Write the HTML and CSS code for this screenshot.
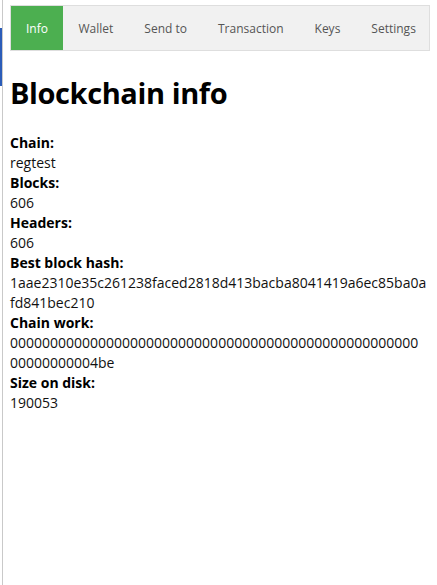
FILE: index.html
```html
<!DOCTYPE html>
<html lang="en">
<head>
<meta charset="utf-8">
<title>Blockchain info</title>
<link rel="stylesheet" href="styles.css">
</head>
<body>
<div class="window">
  <nav class="tabs">
    <a class="tab active" href="#">Info</a>
    <a class="tab" href="#">Wallet</a>
    <a class="tab" href="#">Send to</a>
    <a class="tab" href="#">Transaction</a>
    <a class="tab" href="#">Keys</a>
    <a class="tab" href="#">Settings</a>
  </nav>
  <main class="content">
    <h1 class="title">Blockchain info</h1>
    <dl class="info">
      <dt>Chain:</dt>
      <dd>regtest</dd>
      <dt>Blocks:</dt>
      <dd>606</dd>
      <dt>Headers:</dt>
      <dd>606</dd>
      <dt>Best block hash:</dt>
      <dd>1aae2310e35c261238faced2818d413bacba8041419a6ec85ba0a<wbr>fd841bec210</dd>
      <dt>Chain work:</dt>
      <dd>000000000000000000000000000000000000000000000000000<wbr>00000000004be</dd>
      <dt>Size on disk:</dt>
      <dd>190053</dd>
    </dl>
  </main>
</div>
</body>
</html>
```
FILE: styles.css
```css
html {
  margin: 0;
  background:
    linear-gradient(#2b5cb8, #2b5cb8) 0 28px / 2px 58px no-repeat,
    #ffffff;
}
body {
  margin: 0;
  font-family: "Open Sans", "Noto Sans", sans-serif;
  color: #111;
}
.window {
  margin-left: 2px;
  border-left: 1px solid #c9c9c9;
  min-height: 585px;
  padding: 5px 7px 0 7px;
  box-sizing: border-box;
  background: #fff;
}
.tabs {
  display: flex;
  background: #f1f1f1;
  border: 1px solid #dedede;
  height: 44px;
}
.tab {
  display: flex;
  align-items: center;
  padding: 0 15.5px;
  font-size: 12px;
  color: #555;
  text-decoration: none;
  white-space: nowrap;
}
.tab.active {
  background: #4caf50;
  color: #fff;
  width: 52px;
  box-sizing: border-box;
  justify-content: center;
}
.title {
  margin: 22px 0 20px;
  font-size: 29px;
  letter-spacing: -0.4px;
  font-weight: 700;
  line-height: 40px;
  color: #000;
}
.info {
  margin: 0;
  font-size: 14px;
  line-height: 20px;
}
.info dt {
  font-weight: 700;
  color: #000;
}
.info dd {
  margin: 0;
  overflow-wrap: anywhere;
}
```
